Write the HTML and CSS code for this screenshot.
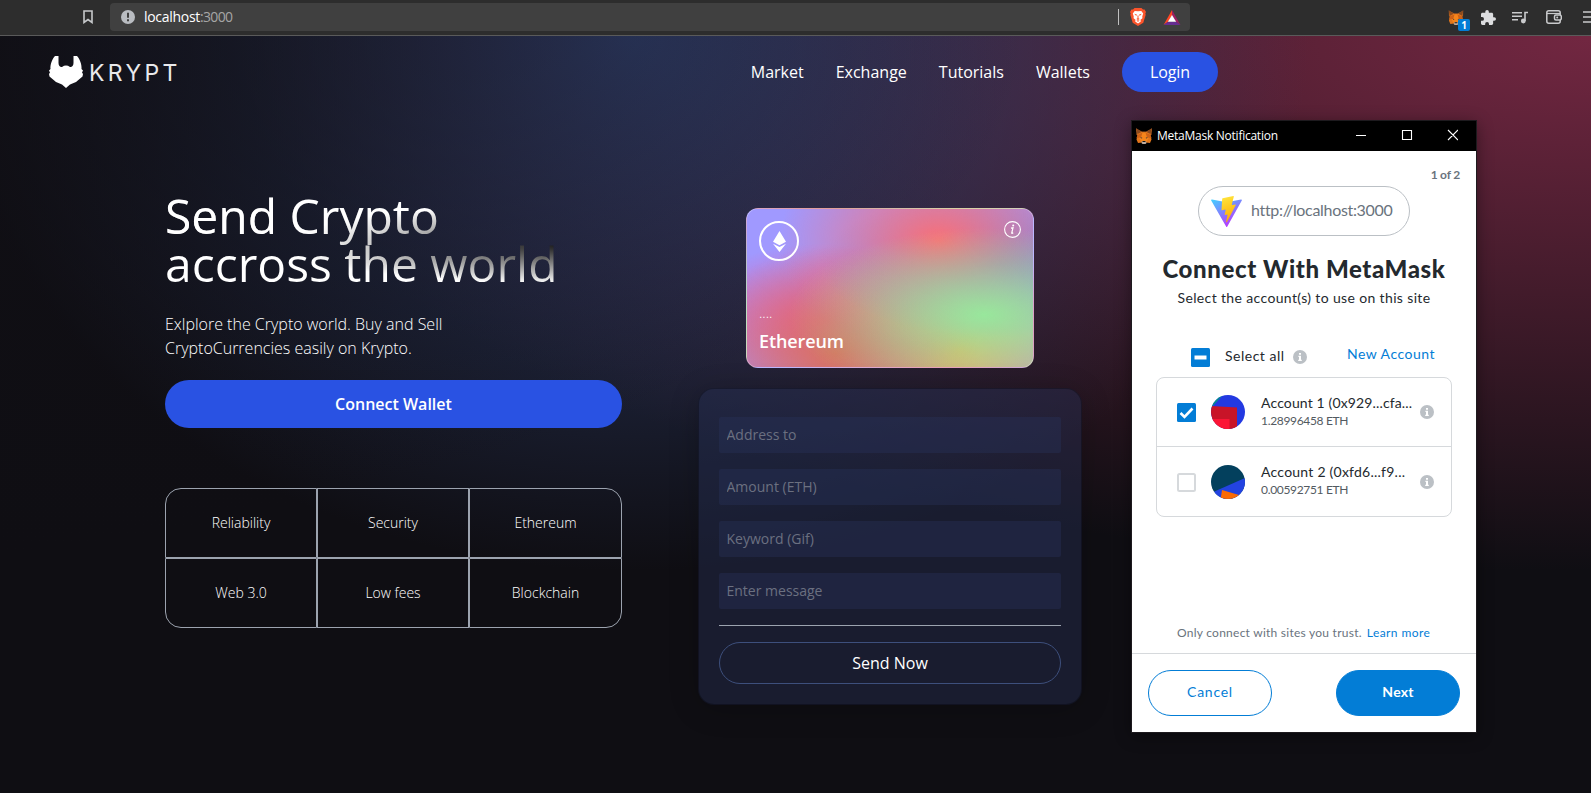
FILE: index.html
```html
<!DOCTYPE html>
<html lang="en">
<head>
<meta charset="utf-8">
<title>Krypt</title>
<link rel="stylesheet" href="styles.css">
</head>
<body>
<svg width="0" height="0" class="defs" aria-hidden="true">
  <defs>
    <symbol id="fox" viewBox="0 0 32 32">
      <path fill="#a55a24" d="M0 1l12 6h8l12-6-1 13H1z"/>
      <path fill="#e2761b" d="M1 3l12 6h6l12-6-2 11 2 9-3 7-8-1-2 2h-4l-2-2-8 1-3-7 2-9z"/>
      <path fill="#f6851b" d="M10 9h12l4 10-5 9H11L6 19z"/>
      <path fill="#cd6116" d="M13 9l-3 10-9 1 2-6zM19 9l3 10 9 1-2-6z"/>
      <path fill="#8a4a1f" d="M0 0l3 12 8-4zM32 0l-3 12-8-4z"/>
      <path fill="#233447" d="M9 18l4 2-3 1zM23 18l-4 2 3 1z"/>
      <path fill="#c0ad9e" d="M12 26h8l1 4-2 2h-6l-2-2z"/>
      <path fill="#161616" d="M13 26h6v2h-6z"/>
    </symbol>
    <symbol id="info" viewBox="0 0 14 14">
      <circle cx="7" cy="7" r="7" fill="#bbc0c5"/>
      <path fill="#fff" d="M6 3h2v1.7H6zM5.4 5.7H8v4h.8V11H5.2V9.700H6V7h-.6z"/>
    </symbol>
  </defs>
</svg>

<div class="toolbar">
  <svg class="bookmark" viewBox="0 0 10 14"><path d="M1 1h8v11.500L5 9.600 1 12.500z" fill="none" stroke="#c6c8ca" stroke-width="1.600"/></svg>
  <div class="urlbar">
    <svg class="warn" viewBox="0 0 14 14"><circle cx="7" cy="7" r="7" fill="#b9bcc1"/><path d="M6 2.800h2v5H6zM6 9.200h2v2H6z" fill="#3f3f3f"/></svg>
    <span class="url"><span class="host">localhost</span><span class="port">:3000</span></span>
    <span class="url-sep"></span>
    <svg class="brave" viewBox="0 0 16 18">
      <path fill="#fb542b" d="M4.500 0h7L13 1.600l1.600-.1L16 4l-.7 1.600.4 1.200-2.400 8L8 18l-5.300-3.200-2.400-8 .4-1.200L0 4l1.400-2.500L3 1.600z"/>
      <path fill="#fff" d="M8 3.200l3.300-.3 1.900 2.600-.9 2.700.1 2-1.900 1.500.3 1.700L8 15.600l-2.800-2.200.3-1.700-1.900-1.500.1-2-.9-2.700 1.900-2.600z"/>
      <path fill="#fb542b" d="M4.200 5.800l2.700.7-.6 1.400zM11.800 5.800l-2.700.7.6 1.400zM7.500 7.500h1v2.700l1.200.7L8 11.900l-1.700-1 1.200-.7zM6.300 12.800L8 12.200l1.700.6L8 13.800z"/>
    </svg>
    <svg class="bat" viewBox="0 0 18 16">
      <path fill="#ff4724" d="M9 0v5.500L4.800 12.600 0 16z"/>
      <path fill="#9e1f63" d="M9 0l9 16-4.800-3.400L9 5.500z"/>
      <path fill="#662d91" d="M0 16l4.800-3.400h8.400L18 16z"/>
      <path fill="#fff" d="M9 5.300l4.400 7.300H4.600z"/>
    </svg>
  </div>
  <div class="extensions">
    <span class="ext-fox"><svg viewBox="0 0 32 32"><use href="#fox"/></svg><span class="badge">1</span></span>
    <svg class="puzzle" viewBox="2 1 21 21"><path fill="#dcdddf" d="M20.500 11H19V7c0-1.100-.9-2-2-2h-4V3.500a2.500 2.500 0 0 0-5 0V5H4c-1.100 0-2 .9-2 2v3.800h1.500a2.700 2.700 0 0 1 0 5.400H2V20c0 1.100.9 2 2 2h3.800v-1.500a2.700 2.700 0 0 1 5.400 0V22H17c1.100 0 2-.9 2-2v-4h1.500a2.500 2.500 0 0 0 0-5z"/></svg>
    <svg class="queue" viewBox="0 0 16 13"><path fill="none" stroke="#c9cacc" stroke-width="1.600" d="M0 1.800h10M0 5.300h10M0 8.800h6M13 10V1.500h3"/><circle cx="11.300" cy="10" r="2.400" fill="#c9cacc"/></svg>
    <svg class="wallet" viewBox="0 0 16 14"><rect x=".8" y=".8" width="13.400" height="12.400" rx="2" fill="none" stroke="#c9cacc" stroke-width="1.500"/><path d="M1 3.500h13" stroke="#c9cacc" stroke-width="1.200"/><rect x="8.500" y="5" width="6.800" height="5" rx="1.500" fill="#2d2d2d" stroke="#c9cacc" stroke-width="1.500"/><circle cx="11.200" cy="7.500" r="1" fill="#c9cacc"/></svg>
    <svg class="menu" viewBox="0 0 16 12"><path stroke="#c9cacc" stroke-width="1.600" d="M0 1h16M0 6h16M0 11h16"/></svg>
  </div>
</div>

<main class="page">
  <header class="nav">
    <div class="logo">
      <svg viewBox="0 0 34 32"><path fill="#fff" d="M6 0h3.500v7c0 3 2 4.500 3.500 4l2-1.200q2-.8 4 0l2 1.200c1.500.5 3.500-1 3.500-4V0H28c3 3 5 9 4.500 13l1.500 1.500-1 2 1 1.500-.5 2.500L27 26l-6 2.500L17 32l-4-3.500L7 26 .5 20.500 0 18l1-1.500-1-2L1.500 13C1 9 3 3 6 0z"/></svg>
      <span>KRYPT</span>
    </div>
    <nav class="links">
      <a>Market</a><a>Exchange</a><a>Tutorials</a><a>Wallets</a><a class="login">Login</a>
    </nav>
  </header>

  <section class="hero">
    <div class="intro">
      <h1>Send Crypto<br>accross the world</h1>
      <p>Exlplore the Crypto world. Buy and Sell<br>CryptoCurrencies easily on Krypto.</p>
      <button class="connect">Connect Wallet</button>
      <div class="features">
        <div>Reliability</div><div>Security</div><div>Ethereum</div>
        <div>Web 3.0</div><div>Low fees</div><div>Blockchain</div>
      </div>
    </div>

    <div class="send">
      <div class="eth-card">
        <div class="card-top">
          <span class="ring"><svg viewBox="0 0 13 21"><path fill="#fff" d="M6.500 0L13 10.800 6.500 14.300 0 10.800zM0 12.800l6.500 3.300 6.500-3.300L6.500 21z"/></svg></span>
          <svg class="i-icon" viewBox="0 0 17 17"><circle cx="8.500" cy="8.500" r="7.900" fill="none" stroke="#fff" stroke-width="1.100"/><circle cx="9.200" cy="4.600" r="1" fill="#fff"/><path d="M7 7.200l2-.4-1.300 5.300q0 .6 1.500-.4" fill="none" stroke="#fff" stroke-width="1.200"/></svg>
        </div>
        <div class="card-bottom"><span class="dots">....</span><span class="coin">Ethereum</span></div>
      </div>
      <form class="form">
        <input placeholder="Address to"><input placeholder="Amount (ETH)"><input placeholder="Keyword (Gif)"><input placeholder="Enter message">
        <div class="rule"></div>
        <button type="button">Send Now</button>
      </form>
    </div>
  </section>
</main>

<aside class="popup">
  <div class="titlebar">
    <svg class="tb-fox" viewBox="0 0 32 32"><use href="#fox"/></svg>
    <span class="tb-title">MetaMask Notification</span>
    <svg class="controls" viewBox="0 0 102 12"><path d="M0 6.500h10M46.500 1.500h9v9h-9zM92 1l10 10M102 1L92 11" fill="none" stroke="#fff" stroke-width="1.100"/></svg>
  </div>
  <div class="pop-main">
    <div class="step">1 of 2</div>
    <div class="origin">
      <svg viewBox="0 0 31 31">
        <defs>
          <linearGradient id="v1" x1="0" y1="0" x2=".6" y2="1"><stop offset="0" stop-color="#41d1ff"/><stop offset="1" stop-color="#bd34fe"/></linearGradient>
          <linearGradient id="v2" x1=".4" y1="0" x2=".6" y2="1"><stop offset="0" stop-color="#ffe63e"/><stop offset=".1" stop-color="#ffdd35"/><stop offset="1" stop-color="#ffa800"/></linearGradient>
        </defs>
        <path fill="url(#v1)" d="M30.800 4.600L16.300 30.500q-.6 1-1.200 0L.2 4.600q-.5-1.200.8-1L15.500 6.200 30 3.600q1.300-.2.8 1z"/>
        <path fill="url(#v2)" d="M22.300.1L11.600 2.200q-.4.100-.4.500L10.500 13.800q0 .6.600.5l3-.7q.6 0 .5.600l-.9 4.300q-.1.600.5.500l1.800-.6q.6-.1.500.5l-1.400 6.800c-.1.500.5.600.8.200L24.800 9.100q.2-.6-.4-.6l-3.100.6q-.6 0-.5-.5l2-7.900q.1-.7-.5-.6z"/>
      </svg>
      <span>http://localhost:3000</span>
    </div>
    <h2>Connect With MetaMask</h2>
    <p class="sub">Select the account(s) to use on this site</p>
    <div class="select-row">
      <svg class="box" viewBox="0 0 19 19"><rect width="19" height="19" rx="1.500" fill="#037dd6"/><path d="M3.500 9.500h12" stroke="#fff" stroke-width="4"/></svg>
      <span class="all">Select all</span>
      <svg class="info" viewBox="0 0 14 14"><use href="#info"/></svg>
      <a class="new">New Account</a>
    </div>
    <div class="accounts">
      <div class="account">
        <svg class="box" viewBox="0 0 19 19"><rect width="19" height="19" rx="1.500" fill="#037dd6"/><path d="M3.500 10l4 4 8-8.500" fill="none" stroke="#fff" stroke-width="2.600"/></svg>
        <svg class="avatar" viewBox="0 0 34 34"><clipPath id="c1"><circle cx="17" cy="17" r="17"/></clipPath><g clip-path="url(#c1)"><path fill="#2339e1" d="M0 0h34v34H0z"/><path fill="#018e8e" d="M0 0h12L0 13z"/><path fill="#c81428" d="M0 11l26 1.500V34H0z"/><path fill="#fb1535" d="M0 24l18.500 0V34H0z"/></g></svg>
        <div class="who"><span class="name">Account 1 (0x929...cfa...</span><span class="bal">1.28996458 ETH</span></div>
        <svg class="info" viewBox="0 0 14 14"><use href="#info"/></svg>
      </div>
      <div class="account">
        <svg class="box" viewBox="0 0 19 19"><rect x="1" y="1" width="17" height="17" rx="1.500" fill="#fff" stroke="#d6d9dc" stroke-width="2"/></svg>
        <svg class="avatar" viewBox="0 0 34 34"><clipPath id="c2"><circle cx="17" cy="17" r="17"/></clipPath><g clip-path="url(#c2)"><path fill="#03405d" d="M0 0h34v34H0z"/><path fill="#2343e1" d="M0 28L34 13v21H0z"/><path fill="#fb6a04" d="M11 25l17 5-2 8H9z"/></g></svg>
        <div class="who"><span class="name n2">Account 2 (0xfd6...f9...</span><span class="bal">0.00592751 ETH</span></div>
        <svg class="info" viewBox="0 0 14 14"><use href="#info"/></svg>
      </div>
    </div>
    <p class="trust"><span>Only connect with sites you trust.</span><a>Learn more</a></p>
  </div>
  <div class="pop-footer"><button class="cancel">Cancel</button><button class="next">Next</button></div>
</aside>
</body>
</html>
```
FILE: styles.css
```css
* { box-sizing: border-box; }
body {
  margin: 0;
  width: 1591px;
  height: 793px;
  overflow: hidden;
  background: #0f0e13;
  font-family: "Open Sans", "Noto Sans", sans-serif;
  color: #fff;
}
svg { display: block; flex: none; }
h1, h2, p { margin: 0; }
button, input { font-family: inherit; }
.defs { position: absolute; }

/* Browser toolbar */
.toolbar {
  display: flex;
  align-items: center;
  height: 36px;
  padding: 0 0 1px 83px;
  background: #2d2d2d;
  border-bottom: 1px solid #5a5a5a;
  overflow: hidden;
}
.bookmark { width: 10px; height: 14px; margin-right: 17px; }
.urlbar {
  display: flex;
  flex: none;
  align-items: center;
  width: 1080px;
  height: 28px;
  padding: 0 9px 0 11px;
  background: #404040;
  border-radius: 4px;
}
.warn { width: 14px; height: 14px; margin-right: 9px; }
.url { flex: 1; font-size: 14px; line-height: 20px; }
.host { letter-spacing: -0.3px; }
.port { color: #a6a6a6; letter-spacing: -0.65px; }
.url-sep { width: 1px; height: 16px; margin-right: 11px; background: #c0c0c0; }
.brave { width: 16px; height: 18px; margin-right: 17px; }
.bat { width: 18px; height: 15px; }
.extensions { display: flex; flex: none; align-items: center; margin-left: 258px; }
.ext-fox { position: relative; margin-right: 17px; }
.ext-fox > svg { width: 16px; height: 15px; }
.badge {
  position: absolute;
  left: 10px;
  top: 9px;
  width: 12px;
  height: 12px;
  border-radius: 2px;
  background: #037dd6;
  font: 700 10px/12px "Open Sans", sans-serif;
  text-align: center;
}
.puzzle { width: 15px; height: 15px; margin-right: 16px; }
.queue { width: 16px; height: 13px; margin-right: 18px; }
.wallet { width: 16px; height: 14px; margin-right: 21px; }
.menu { width: 16px; height: 12px; }

/* Page */
.page {
  height: 757px;
  background-color: #0f0e13;
  background-image:
    radial-gradient(at 0% 0%, hsl(253, 16%, 7%) 0, transparent 50%),
    radial-gradient(at 50% 0%, hsl(225, 39%, 30%) 0, transparent 50%),
    radial-gradient(at 100% 0%, hsl(339, 49%, 30%) 0, transparent 50%);
  background-size: 1920px 757px;
  background-position: right 0 top 0;
  background-repeat: no-repeat;
}
.nav {
  display: flex;
  align-items: center;
  width: 1218px;
  height: 72px;
  padding-left: 49px;
}
.logo { display: flex; align-items: center; gap: 6px; }
.logo svg { width: 34px; height: 32px; }
.logo span { font: 400 23px/32px Inter, sans-serif; letter-spacing: 3.4px; color: #e9e9ec; padding-top: 1px; }
.links { display: flex; align-items: center; gap: 32px; margin-left: auto; font-size: 16px; line-height: 24px; }
.login { padding: 8px 28px; border-radius: 20px; background: #2952e3; letter-spacing: -0.1px; }

.hero { display: flex; gap: 76px; padding: 80px 0 0 165px; }
.intro { width: 457px; }
h1 {
  width: fit-content;
  padding: 4px 16px 4px 0;
  font-weight: 400;
  font-size: 48px;
  line-height: 48px;
  background-color: #fff;
  background-image:
    radial-gradient(at 4% 36%, #fff 0, transparent 53%),
    radial-gradient(at 101% 54%, #0c0c0c 0, transparent 50%);
  -webkit-background-clip: text;
  background-clip: text;
  -webkit-text-fill-color: transparent;
}
.intro p { margin-top: 20px; font-weight: 300; font-size: 16px; line-height: 24px; }
.connect {
  display: block;
  width: 457px;
  height: 48px;
  margin-top: 20px;
  padding: 0;
  border: 0;
  border-radius: 24px;
  background: #2952e3;
  color: #fff;
  font-weight: 600;
  font-size: 16px;
  line-height: 24px;
}
.features {
  display: grid;
  grid-template-columns: 152px 152px 153px;
  grid-auto-rows: 70px;
  margin-top: 60px;
}
.features div {
  display: flex;
  align-items: center;
  justify-content: center;
  border: 1px solid #9ca3af;
  font-weight: 300;
  font-size: 14px;
  line-height: 20px;
}
.features div:nth-child(1) { border-top-left-radius: 16px; }
.features div:nth-child(3) { border-top-right-radius: 16px; }
.features div:nth-child(4) { border-bottom-left-radius: 16px; }
.features div:nth-child(6) { border-bottom-right-radius: 16px; }

.send { display: flex; flex-direction: column; align-items: center; width: 384px; padding-top: 20px; }
.eth-card {
  display: flex;
  flex-direction: column;
  justify-content: space-between;
  width: 288px;
  height: 160px;
  padding: 12px;
  border: 1px solid rgba(255, 255, 255, 0.3);
  border-radius: 12px;
  background-color: #a099ff;
  background-image:
    radial-gradient(at 83% 67%, rgb(152, 231, 156) 0, transparent 58%),
    radial-gradient(at 67% 20%, hsl(357, 94%, 71%) 0, transparent 59%),
    radial-gradient(at 88% 35%, hsl(222, 81%, 65%) 0, transparent 50%),
    radial-gradient(at 31% 91%, hsl(9, 61%, 61%) 0, transparent 52%),
    radial-gradient(at 27% 71%, hsl(336, 91%, 65%) 0, transparent 49%),
    radial-gradient(at 74% 89%, hsl(30, 98%, 65%) 0, transparent 51%),
    radial-gradient(at 53% 75%, hsl(174, 94%, 68%) 0, transparent 45%);
}
.card-top { display: flex; justify-content: space-between; align-items: flex-start; }
.ring {
  display: flex;
  align-items: center;
  justify-content: center;
  width: 40px;
  height: 40px;
  border: 2px solid #fff;
  border-radius: 50%;
}
.ring svg { width: 13px; height: 21px; }
.i-icon { width: 17px; height: 17px; }
.card-bottom { display: flex; flex-direction: column; }
.dots { font-weight: 300; font-size: 14px; line-height: 20px; }
.coin { margin-top: 4px; font-weight: 600; font-size: 18px; line-height: 28px; letter-spacing: -0.1px; }

.form {
  display: flex;
  flex-direction: column;
  width: 384px;
  height: 317px;
  margin-top: 20px;
  padding: 28px 20px 20px;
  border: 1px solid rgba(0, 0, 0, 0.3);
  border-radius: 16px;
  background: rgba(39, 51, 89, 0.4);
  box-shadow: 0 4px 30px rgba(0, 0, 0, 0.2);
}
.form input {
  height: 36px;
  margin: 0 0 16px;
  padding: 7px 8px 9px 7.500px;
  border: 0;
  border-radius: 2px;
  background: rgba(39, 51, 89, 0.4);
  color: #fff;
  font-size: 14px;
  line-height: 20px;
}
.form input::placeholder { color: #6b7080; opacity: 1; }
.rule { height: 1px; background: #9ca3af; }
.form button {
  height: 42px;
  margin-top: 16px;
  border: 1px solid #3d4f7c;
  border-radius: 21px;
  background: none;
  color: #fff;
  font-size: 16px;
  line-height: 24px;
}

/* Wallet window */
.popup {
  position: absolute;
  left: 1132px;
  top: 121px;
  display: flex;
  flex-direction: column;
  width: 344px;
  height: 611px;
  background: #fff;
  box-shadow: 0 0 0 1px #1d1a1e, 0 3px 16px rgba(0, 0, 0, 0.45);
  font-family: Lato, sans-serif;
  color: #24292e;
}
.titlebar {
  display: flex;
  align-items: center;
  height: 30px;
  padding: 0 18px 0 4px;
  background: #000;
  color: #fff;
}
.tb-fox { width: 16px; height: 16px; margin-right: 5px; }
.tb-title { font: 400 12px/16px "Open Sans", sans-serif; letter-spacing: -0.25px; }
.controls { width: 102px; height: 12px; margin: -3px 0 0 auto; }
.pop-main { flex: 1; padding: 15px 16px 0; }
.step { text-align: right; font-weight: 700; font-size: 12px; line-height: 17px; letter-spacing: -0.2px; color: #6a737d; }
.origin {
  display: flex;
  align-items: center;
  width: 212px;
  height: 50px;
  margin: 3px auto 0;
  padding-left: 12px;
  border: 1px solid #bbc0c5;
  border-radius: 25px;
  color: #6a737d;
  font-size: 16px;
  letter-spacing: -0.32px;
}
.origin svg { width: 31px; height: 31px; margin-right: 9px; }
.origin span { padding-bottom: 4px; }
h2 { margin-top: 16px; font-weight: 900; font-size: 24px; line-height: 34px; letter-spacing: 0.6px; text-align: center; }
.sub { margin-top: 2px; font-size: 14px; line-height: 20px; letter-spacing: 0.36px; text-align: center; }
.select-row { display: flex; align-items: center; margin-top: 38px; padding: 0 0 0 43px; height: 22px; }
.box { width: 19px; height: 19px; }
.all { margin: -3px 8px 0 15px; font-size: 14px; line-height: 20px; letter-spacing: 0.5px; }
.info { width: 14px; height: 14px; }
.new { margin: -7px 25px 0 auto; font-size: 14px; line-height: 20px; letter-spacing: 0.5px; color: #037dd6; }
.accounts { margin: 9px 8px 0; height: 140px; border: 1px solid #d6d9dc; border-radius: 8px; }
.account { display: flex; align-items: center; height: 68px; padding: 0 17px 0 20px; }
.account + .account { border-top: 1px solid #d6d9dc; height: 71px; }
.avatar { width: 34px; height: 34px; margin: -1px 16px 0 15px; }
.who { display: flex; flex-direction: column; width: 152px; padding-bottom: 2px; white-space: nowrap; }
.account + .account .who { padding-bottom: 4px; }
.name { font-size: 14px; line-height: 20px; letter-spacing: 0.14px; }
.n2 { letter-spacing: 0.24px; }
.bal { font-size: 12px; line-height: 16px; letter-spacing: -0.33px; color: #535a61; }
.account .info { margin-left: auto; }
.trust { display: flex; gap: 5px; margin-top: 107px; padding-left: 29px; font-size: 12px; line-height: 17px; color: #6a737d; }
.trust span { letter-spacing: 0.25px; }
.trust a { letter-spacing: 0.42px; color: #037dd6; }
.pop-footer {
  display: flex;
  justify-content: space-between;
  height: 79px;
  padding: 16px;
  border-top: 1px solid #d6d9dc;
}
.pop-footer button {
  width: 124px;
  height: 46px;
  border: 1px solid #037dd6;
  border-radius: 23px;
  font-size: 14px;
  line-height: 20px;
  padding: 0 0 3px;
}
.cancel { background: #fff; color: #037dd6; letter-spacing: 0.75px; }
.next { background: #037dd6; color: #fff; font-weight: 700; letter-spacing: 0.2px; }
```
